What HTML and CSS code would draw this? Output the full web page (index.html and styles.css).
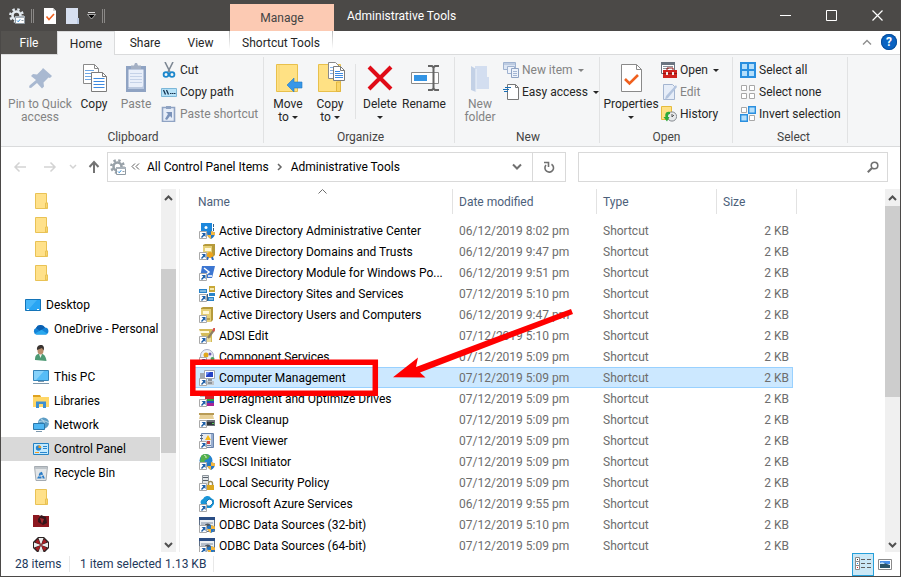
FILE: index.html
```
<!DOCTYPE html>
<html lang="en">
<head>
  <meta charset="UTF-8" />
  <title>Administrative Tools</title>
  <link rel="stylesheet" href="styles.css">
</head>
<body>

  <!-- shared icons -->
  <svg class="defs" aria-hidden="true">
    <symbol id="folder" viewBox="0 0 16 16">
      <path d="M2.500 .5h11v9.500h1v5.500h-12z" fill="#ffe18a" stroke="#e9c255"/>
      <path d="M12.500 15v-5h2v5z" fill="#f9d66e" stroke="#e9c255"/>
    </symbol>
    <symbol id="shortcut" viewBox="0 0 16 16">
      <path d="M.5 8.500h7v7h-7z" fill="#fff" stroke="#a9a9a9"/>
      <path d="M2.500 10h4v4l-1.300-1.300L3 15l-1-1 2.200-2.500z" fill="#1d5fa8"/>
    </symbol>
    <symbol id="shield" viewBox="0 0 16 16">
      <path d="M12 8l4 1.500c0 3-1 5-4 6.500-3-1.500-4-3.500-4-6.500z" fill="#2476c2"/>
      <path d="M12 8l4 1.500V12h-4zM8.300 12H12v4c-2-1-3.200-2.300-3.700-4z" fill="#f6b73c"/>
    </symbol>
    <symbol id="gear" viewBox="0 0 16 16">
      <g fill="none" stroke-width="2.600">
        <circle cx="7.500" cy="7.500" r="4"/>
        <circle cx="7.500" cy="7.500" r="6.200" stroke-width="2.400" stroke-dasharray="2.400 2.470"/>
      </g>
      <path d="M6.500 8.500h9v7h-9z" fill="#fff" stroke="#8f9aa3"/>
      <path d="M6 8h10v2H6z" fill="#a9b2ba" stroke="none"/>
      <path d="M8 12.500l1.200 1.200 2-2.400" fill="none" stroke="#2186d8"/>
      <path d="M12.500 12.500h2" stroke="#8f9aa3" fill="none"/>
    </symbol>
    <symbol id="odbc" viewBox="0 0 16 16">
      <path d="M.5 .5h15v14H.5z" fill="#eceff2" stroke="#5f6f86"/>
      <path d="M0 0h16v3H0z" fill="#2a4d84"/>
      <path d="M2 6h12M2 8h3" stroke="#7f8ea3"/>
      <path d="M5 8q4-3 7 0v3H7z" fill="#4b5560"/>
      <use href="#shield"/>
      <use href="#shortcut"/>
    </symbol>
    <symbol id="arrow-up" viewBox="0 0 15 17">
      <path d="M4 11l3.500-3.500L11 11" fill="none" stroke="#505050" stroke-width="2"/>
    </symbol>
    <symbol id="arrow-down" viewBox="0 0 15 17">
      <path d="M4 8l3.500 3.500L11 8" fill="none" stroke="#505050" stroke-width="2"/>
    </symbol>
  </svg>

  <header class="titlebar">
    <div class="quick">
      <svg class="i16 gear-light"><use href="#gear"/></svg>
      <span class="grip"></span>
      <button aria-label="Properties">
        <svg class="i16" viewBox="0 0 16 16">
          <path d="M2 0h9l3 3v13H2z" fill="#fff"/><path d="M11 0v3h3" fill="#d0d0d0"/>
          <path d="M4.500 8.500l2.500 3 5-5.500" fill="none" stroke="#f0601e" stroke-width="1.600"/>
        </svg>
      </button>
      <button aria-label="New folder">
        <svg class="i16" viewBox="0 0 16 16"><path d="M2 0h12v10h1v6H2z" fill="#d7e0f0"/><path d="M13 10h2v6h-2z" fill="#bccbe3"/></svg>
      </button>
      <button class="narrow" aria-label="Customize toolbar">
        <svg width="9" height="9" viewBox="0 0 9 9"><path d="M1 1.500h7" stroke="#ddd"/><path d="M.5 3.500h8l-4 4.500z" fill="#000" stroke="#ddd" stroke-width=".7"/></svg>
      </button>
      <span class="grip"></span>
    </div>
    <div class="manage">Manage</div>
    <h1>Administrative Tools</h1>
    <div class="controls">
      <button aria-label="Minimize"><svg width="11" height="11"><path d="M0 5.500h11" stroke="#fff"/></svg></button>
      <button aria-label="Maximize"><svg width="11" height="11"><path d="M.5 .5h10v10H.5z" fill="none" stroke="#fff"/></svg></button>
      <button aria-label="Close"><svg width="11" height="11"><path d="M.5 .5l10 10M10.500 .5l-10 10" stroke="#fff" stroke-width="1.200"/></svg></button>
    </div>
  </header>

  <nav class="tabs">
    <button class="tab file">File</button>
    <button class="tab home">Home</button>
    <button class="tab share">Share</button>
    <button class="tab view">View</button>
    <button class="tab context">Shortcut Tools</button>
    <button class="collapse" aria-label="Collapse the ribbon"><svg width="10" height="7"><path d="M1 5.500l4-4 4 4" fill="none" stroke="#8e8e8e" stroke-width="1.400"/></svg></button>
    <button class="help" aria-label="Help">?</button>
  </nav>

  <section class="ribbon">
    <div class="group clipboard">
      <div class="tools">
        <button class="big w74" disabled>
          <svg viewBox="0 0 32 32"><path d="M19 6l9 8-2 2-1.500-.5-5 5 .5 4-2 2-5-5.500L7 26l-2-.5.500-2L12 18l-5-4 2-2 4 .5 5-5z" fill="#a9b9d1"/></svg>
          Pin to Quick<br>access
        </button>
        <button class="big w34">
          <svg viewBox="0 0 32 32">
            <path d="M5.500 2.500h11l4 4v15h-15z" fill="#fff" stroke="#8a8a8a"/><path d="M16.500 2.500v4h4" fill="none" stroke="#8a8a8a"/>
            <path d="M7 8.500h9M7 11.500h8M7 14.500h6M7 17.500h6" stroke="#6fa7e4"/>
            <path d="M13.500 10.500h11l4 4v15h-15z" fill="#fff" stroke="#7c7c7c"/><path d="M24.500 10.500v4h4" fill="none" stroke="#7c7c7c"/>
            <path d="M15.500 16.500h11M15.500 19.500h11M15.500 22.500h11M15.500 25.500h11" stroke="#3e8ae0"/>
          </svg>
          Copy
        </button>
        <button class="big w50" disabled>
          <svg viewBox="0 0 32 32">
            <path d="M6 4h20v26H6z" fill="#8fa3c3"/><path d="M8.500 7.500h15v18h-15z" fill="#e9effa"/>
            <path d="M11 7V3.500h3L15 1h2l1 2.500h3V7z" fill="#a4b0c4"/>
            <path d="M10 11.500h12M10 14.500h12M10 17.500h12M10 20.500h12" stroke="#c5d2e8"/><path d="M8 26l14 0 2-5v6H8z" fill="#b9c8e0"/>
          </svg>
          Paste
        </button>
        <div class="stack">
          <button>
            <svg viewBox="0 0 16 16"><path d="M4 0l5 10M12 0L7 10" stroke="#7d8894" stroke-width="1.600"/><g fill="none" stroke="#1b87cc" stroke-width="1.800"><circle cx="5" cy="12.500" r="2.400"/><circle cx="11" cy="12.500" r="2.400"/></g></svg>
            Cut
          </button>
          <button>
            <svg viewBox="0 0 16 16"><path d="M.5 4.500h15v8H.5z" fill="#b6e2f8" stroke="#7cb7d8"/><path d="M2.500 6l2 4.500M5.500 6l2 4.500" stroke="#15324f" stroke-width="1.300"/><path d="M9 9.500h1.500M11 9.500h1.500M13 9.500h1.500" stroke="#15324f"/></svg>
            Copy path
          </button>
          <button disabled>
            <svg viewBox="0 0 16 16"><path d="M1.500 1.500h12v14h-12z" fill="#e6edf8" stroke="#8fa3c3" stroke-width="1.600"/><path d="M5 0h5v3H5z" fill="#8fa3c3"/><path d="M5 6h6v6l-2-2-3 4-2-1 3-5z" fill="#7b93ba"/></svg>
            Paste shortcut
          </button>
        </div>
      </div>
      <h2>Clipboard</h2>
    </div>

    <div class="group organize">
      <div class="tools">
        <button class="big w42">
          <svg viewBox="0 0 32 32"><path d="M4.500 2.500h21v27h-21z" fill="#ffe184" stroke="#e8c04c"/><path d="M7 3v26" stroke="#f4d374"/><path d="M15 23l7-7v4h8v6h-8v4z" fill="#3797e8" stroke="#2379c4" stroke-width=".6"/></svg>
          Move<br>to <i class="caret"></i>
        </button>
        <button class="big w42">
          <svg viewBox="0 0 32 32"><path d="M4.500 2.500h22v27h-22z" fill="#ffe184" stroke="#e8c04c"/><path d="M22.500 20v9.500h4V20z" fill="#f8d468" stroke="#e2b740"/>
            <path d="M14.500 .5h7l4 4v12h-11z" fill="#fff" stroke="#8a8a8a"/><path d="M16 5.500h6M16 8.500h4M16 11.500h4" stroke="#84b2e8"/>
            <path d="M19.500 4.500h7l4 4v10h-11z" fill="#fff" stroke="#7c7c7c"/><path d="M26.500 4.500v4h4" fill="none" stroke="#7c7c7c"/><path d="M21 9.500h5M21 11.500h8M21 13.500h8M21 15.500h8" stroke="#3e8ae0"/></svg>
          Copy<br>to <i class="caret"></i>
        </button>
        <span class="rule"></span>
        <button class="big w42">
          <svg viewBox="0 0 32 32"><path d="M5 5l22 22M27 5L5 27" stroke="#e00b17" stroke-width="4"/></svg>
          Delete<br><i class="caret"></i>
        </button>
        <button class="big w46">
          <svg viewBox="0 0 32 32"><path d="M3.500 10.500h27v11h-27z" fill="#fff" stroke="#8a8a8a"/><path d="M6 13h13v6H6z" fill="#3394e4"/><path d="M20 4h4l1.500 1.500L27 4h4M20 28h4l1.500-1.500L27 28h4M25.500 5v22" fill="none" stroke="#656565" stroke-width="2"/></svg>
          Rename
        </button>
      </div>
      <h2>Organize</h2>
    </div>

    <div class="group new">
      <div class="tools">
        <button class="big w46" disabled>
          <svg viewBox="0 0 32 32"><path d="M11 4h12v11h2v12H11z" fill="#d3def0"/><path d="M7 4l5 3v23l-5-2z" fill="#c3d1e6"/><path d="M12 7v23" stroke="#eef3fa"/></svg>
          New<br>folder
        </button>
        <div class="stack">
          <button disabled>
            <svg viewBox="0 0 16 16"><path d="M.5 .5h12v7H.5z" fill="#dbe5f3" stroke="#9fb2d0"/><path d="M.5 2h12" stroke="#9fb2d0"/><path d="M4.500 4.500h7v7h-7z" fill="#eef3fb" stroke="#9fb2d0"/><path d="M8.500 6.500h7v9h-7z" fill="#eef3fb" stroke="#8fa3c3"/><path d="M10 9.500h4M10 11.500h4M10 13.500h4" stroke="#a4b6d4"/></svg>
            New item <i class="caret"></i>
          </button>
          <button>
            <svg viewBox="0 0 16 16"><path d="M4.500 .5h8l3 3v12h-11z" fill="#fff" stroke="#777"/><path d="M12.500 .5v3h3" fill="none" stroke="#777"/><path d="M2 3.500h6M0 5.500h6M1 7.500h4" stroke="#1b6fb5"/></svg>
            Easy access <i class="caret"></i>
          </button>
        </div>
      </div>
      <h2>New</h2>
    </div>

    <div class="group open">
      <div class="tools">
        <button class="big w60">
          <svg viewBox="0 0 32 32"><path d="M6.500 2.500h15l5 5v22h-20z" fill="#fff" stroke="#8a8a8a"/><path d="M21.500 2.500v5h5" fill="none" stroke="#8a8a8a"/><path d="M10 17l4.500 4.500L23 13" fill="none" stroke="#f0601e" stroke-width="2.600"/></svg>
          Properties<br><i class="caret"></i>
        </button>
        <div class="stack">
          <button>
            <svg viewBox="0 0 16 16"><path d="M.5 .5h13v11H.5z" fill="#fff" stroke="#6a7480"/><path d="M0 0h14v3H0z" fill="#6a7480"/><path d="M2 4.500h10M2 6.500h6" stroke="#8a939d"/><path d="M6 8V6h6v2" fill="none" stroke="#8b1414"/><path d="M2 8h14v8H2z" fill="#cf2420"/><path d="M2 11.500h14" stroke="#8f1512"/><path d="M5 10h2v3H5zM11 10h2v3h-2z" fill="#eee"/></svg>
            Open <i class="caret"></i>
          </button>
          <button disabled>
            <svg viewBox="0 0 16 16"><path d="M2.500 .5h9l2 2v13h-11z" fill="#e6edf8" stroke="#a4b5d0"/><path d="M15 1l1 2-9 11-3 1.500 1-3.500z" fill="#b3c4de"/></svg>
            Edit
          </button>
          <button>
            <svg viewBox="0 0 16 16"><path d="M.5 .5h10v13H.5z" fill="#ffe184" stroke="#e5bc3e"/><circle cx="11" cy="10.500" r="4.600" fill="#e6e8ea" stroke="#84898f"/><path d="M11 8v3l2-2" fill="none" stroke="#555"/><path d="M9 6C4 5 4 9 4.500 11H2.500L6 15.500 8.500 11H7c0-2 0-3 2-3z" fill="#2faa3a"/></svg>
            History
          </button>
        </div>
      </div>
      <h2>Open</h2>
    </div>

    <div class="group select">
      <div class="tools">
        <div class="stack">
          <button>
            <svg viewBox="0 0 16 16"><path d="M1 1h14v14H1zM8 1v14M1 8h14" fill="#b5dffb" stroke="#2a8fdf" stroke-width="2"/></svg>
            Select all
          </button>
          <button>
            <svg viewBox="0 0 16 16"><path d="M1.500 1.500h5v5h-5zM9.500 1.500h5v5h-5zM1.500 9.500h5v5h-5zM9.500 9.500h5v5h-5z" fill="#fff" stroke="#a8a8a8"/></svg>
            Select none
          </button>
          <button>
            <svg viewBox="0 0 16 16"><path d="M1.500 1.500h5v5h-5zM9.500 9.500h5v5h-5z" fill="#fff" stroke="#a8a8a8"/><path d="M8.700.7h6.600v6.600H8.700zM.7 8.700h6.600v6.600H.7z" fill="#b5dffb" stroke="#2a8fdf" stroke-width="1.400"/></svg>
            Invert selection
          </button>
        </div>
      </div>
      <h2>Select</h2>
    </div>
  </section>

  <div class="address-row">
    <button class="nav" aria-label="Back" disabled><svg viewBox="0 0 16 16"><path d="M14 8H3M7.500 3.500L3 8l4.500 4.500" fill="none" stroke="#d3d3d3" stroke-width="1.500"/></svg></button>
    <button class="nav" aria-label="Forward" disabled><svg viewBox="0 0 16 16"><path d="M2 8h11M8.500 3.500L13 8l-4.500 4.500" fill="none" stroke="#d3d3d3" stroke-width="1.500"/></svg></button>
    <button class="nav recent" aria-label="Recent locations" disabled><svg viewBox="0 0 16 16"><path d="M5 6l3 3 3-3" fill="none" stroke="#d3d3d3" stroke-width="1.500"/></svg></button>
    <button class="nav up" aria-label="Up"><svg viewBox="0 0 16 16"><path d="M8 14V3M3.500 8L8 3l4.500 5" fill="none" stroke="#737373" stroke-width="2"/></svg></button>
    <div class="address">
      <svg class="i16 gear-dark"><use href="#gear"/></svg>
      <svg class="back2" width="9" height="8"><path d="M4 .5L1 3.500l3 3M8 .5L5 3.500l3 3" fill="none" stroke="#5f5f5f"/></svg>
      <a href="#">All Control Panel Items</a>
      <svg class="crumb" width="6" height="8"><path d="M1 1l3 3-3 3" fill="none" stroke="#666" stroke-width="1.500"/></svg>
      <a href="#">Administrative Tools</a>
      <button class="drop" aria-label="Previous locations"><svg width="10" height="8"><path d="M1 1.500l4 4 4-4" fill="none" stroke="#707070" stroke-width="2"/></svg></button>
      <button class="refresh" aria-label="Refresh"><svg width="12" height="13" viewBox="0 0 12 13"><path d="M8.500 3.200A4.300 4.300 0 1 1 3 4" fill="none" stroke="#707070" stroke-width="1.600"/><path d="M1 1.500h4.500v4.500" fill="none" stroke="#707070" stroke-width="1.600"/></svg></button>
    </div>
    <div class="search">
      <input type="text" aria-label="Search Administrative Tools">
      <svg width="12" height="12" viewBox="0 0 12 12"><circle cx="7.500" cy="4.500" r="3.300" fill="none" stroke="#707070" stroke-width="1.600"/><path d="M5 7L.8 11.200" stroke="#707070" stroke-width="2"/></svg>
    </div>
  </div>

  <main>
    <ul class="tree">
      <li><a href="#" aria-label="Folder"><svg><use href="#folder"/></svg></a></li>
      <li><a href="#" aria-label="Folder"><svg><use href="#folder"/></svg></a></li>
      <li><a href="#" aria-label="Folder"><svg><use href="#folder"/></svg></a></li>
      <li><a href="#" aria-label="Folder"><svg><use href="#folder"/></svg></a></li>
      <li class="root"><a href="#"><svg viewBox="0 0 16 16"><path d="M.5 2.500h15v11H.5z" fill="#29a5f3" stroke="#1474b8"/><path d="M1 3h11L3 13H1z" fill="#46b6f8"/><path d="M2 12.500h2M12 12.500h2" stroke="#fff"/></svg>Desktop</a></li>
      <li><a href="#"><svg viewBox="0 0 16 16"><path d="M3.500 13.500A3.400 3.400 0 0 1 3 7a5 5 0 0 1 9-.5 3.600 3.600 0 0 1 1 7z" fill="#1482d6"/><path d="M3 7a5 5 0 0 1 9-.5L7 10z" fill="#0b5fb0"/><path d="M2 12.500L8.500 8.700l6 4a3.600 3.600 0 0 1-1.500.8H3.500z" fill="#29a8ee"/></svg>OneDrive - Personal</a></li>
      <li><a href="#" aria-label="User"><svg viewBox="0 0 16 16"><path d="M2 15c0-4 1-6 5-6.500 4 0 6 3 6.500 7.500z" fill="#4d9a74"/><path d="M6 9l1.500 4L9 9z" fill="#eef3ef"/><ellipse cx="7.500" cy="5.500" rx="3" ry="4" fill="#b98d6c"/><path d="M4 5c-.5-4 2-5 4-5s4 2 2.500 5.500L9 3z" fill="#3a3431"/></svg></a></li>
      <li><a href="#"><svg viewBox="0 0 16 16"><path d="M.5 1.500h15v10H.5z" fill="#56bdf7" stroke="#3584b8"/><path d="M1 2h10L3 11H1z" fill="#86d2fb"/><path d="M0 14.500h16" stroke="#7c98ad"/><path d="M5 12.500h6" stroke="#7c98ad"/></svg>This PC</a></li>
      <li><a href="#"><svg viewBox="0 0 16 16"><path d="M0 2h7l1 2h8v10H0z" fill="#ffd768"/><path d="M0 2h7l1 2H0z" fill="#dfa220"/><path d="M3 15V8.500h10V15h-3v-4H6v4z" fill="#3e8fd0"/></svg>Libraries</a></li>
      <li><a href="#"><svg viewBox="0 0 16 16"><circle cx="10.500" cy="6" r="5.500" fill="#5b9cc4"/><path d="M8 2c3 1 4 4 3 8M6 5c4-2 7-1 10 1" stroke="#c3dfee" fill="none"/><path d="M.5 6.500h11v6H.5z" fill="#4eb7f4" stroke="#2b78ab"/><path d="M3 14.500h6" stroke="#7c98ad"/></svg>Network</a></li>
      <li class="current"><a href="#"><svg viewBox="0 0 16 16"><path d="M.5 2.500h15v11H.5z" fill="#c4eafe" stroke="#2583c4"/><circle cx="5.500" cy="7" r="2.700" fill="#2a86cf"/><path d="M5.500 7V4.300A2.700 2.700 0 0 1 8.200 7z" fill="#f59a1d"/><path d="M10 5.500h4M10 7.500h4M7 11.500h7" stroke="#2a86cf"/><path d="M2 11.500h4" stroke="#f59a1d"/></svg>Control Panel</a></li>
      <li><a href="#"><svg viewBox="0 0 16 16"><path d="M1.500 1.500h13l-1.500 14H3z" fill="#e3e6e8" stroke="#a4abb1"/><path d="M2 2h12v2H2z" fill="#bec4c9"/><path d="M5.500 12.500h5L8 7z" fill="none" stroke="#2a7cc7" stroke-width="1.800" stroke-dasharray="3 1"/></svg>Recycle Bin</a></li>
      <li><a href="#" aria-label="Folder"><svg><use href="#folder"/></svg></a></li>
      <li><a href="#" aria-label="Red folder"><svg viewBox="0 0 16 16"><path d="M0 2h6l1 1h9v11H0z" fill="#8c1820"/><path d="M5 6l3-4 5 2 1 6-4 2-5-3z" fill="#35161b"/><path d="M7 5l4 1-2 5z" fill="#a62a30"/></svg></a></li>
      <li><a href="#" aria-label="Umbrella"><svg viewBox="0 0 16 16"><path d="M5 0h6l5 5v6l-5 5H5l-5-5V5z" fill="#2b2424"/><path d="M8 8L5.500 1h5zM8 8l2.500 7h-5zM8 8l7-2.500v5zM8 8L1 5.500v5z" fill="#eee"/><path d="M8 8l3-6 3 3zM8 8l6 3-3 3zM8 8l-3 6-3-3zM8 8L2 5l3-3z" fill="#a71f24"/></svg></a></li>
    </ul>

    <div class="scrollbar tree-scroll">
      <svg><use href="#arrow-up"/></svg>
      <div class="track"><div class="thumb"></div></div>
      <svg><use href="#arrow-down"/></svg>
    </div>

    <div class="list">
      <svg class="sort" width="9" height="5"><path d="M.5 4.500l4-4 4 4" fill="none" stroke="#6d6d6d"/></svg>
      <table>
        <colgroup><col class="c-name"><col class="c-date"><col class="c-type"><col class="c-size"><col class="c-end"></colgroup>
        <thead>
          <tr><th>Name</th><th>Date modified</th><th>Type</th><th>Size</th><th class="end"></th></tr>
        </thead>
        <tbody>
          <tr><td><svg viewBox="0 0 16 16"><path d="M2 0h11v10H2z" fill="#1c87dc"/><path d="M14 1h1v3h-1zM14 5h1v3h-1z" fill="#315f8a"/><circle cx="7" cy="4.500" r="1.500" fill="#fff"/><use href="#shield"/><use href="#shortcut"/></svg>Active Directory Administrative Center</td><td>06/12/2019 8:02 pm</td><td>Shortcut</td><td>2 KB</td></tr>
          <tr><td><svg viewBox="0 0 16 16"><path d="M4 1l2-1h10v11l-2 2H4z" fill="#b59a3b"/><path d="M4 2h9v11H4z" fill="#e6d077"/><path d="M6 4h6v3H6z" fill="#fff8d8"/><circle cx="11" cy="11" r="3" fill="#eda31a"/><path d="M9 13l-1 3M13 13l1 3" stroke="#2a68ba" stroke-width="2"/><use href="#shortcut"/></svg>Active Directory Domains and Trusts</td><td>06/12/2019 9:47 pm</td><td>Shortcut</td><td>2 KB</td></tr>
          <tr><td><svg viewBox="0 0 16 16"><path d="M3 1h13l-3 12H1z" fill="#3c76d1"/><path d="M5 3l5 4-5 4M9 11h4" fill="none" stroke="#fff" stroke-width="1.500"/><use href="#shortcut"/></svg>Active Directory Module for Windows Po...</td><td>06/12/2019 9:51 pm</td><td>Shortcut</td><td>2 KB</td></tr>
          <tr><td><svg viewBox="0 0 16 16"><path d="M0 3h8v4H0zM10 7h6v3h-6zM9 11h6v4H9z" fill="#2882c8"/><path d="M1 5h6M10 13h4" stroke="#d6edfa"/><path d="M10 0h6v6h-6z" fill="#c8a838"/><path d="M11 2h4v2h-4z" fill="#f5e7ad"/><path d="M8.500 8v7" stroke="#34618c"/><use href="#shortcut"/></svg>Active Directory Sites and Services</td><td>07/12/2019 5:10 pm</td><td>Shortcut</td><td>2 KB</td></tr>
          <tr><td><svg viewBox="0 0 16 16"><path d="M2 1l2-1h10v13l-2 2H2z" fill="#b59a3b"/><path d="M2 2h10v13H2z" fill="#e6d077"/><path d="M4 4h6v3H4z" fill="#fff8d8"/><path d="M8 12h3" stroke="#8c7524"/><use href="#shortcut"/></svg>Active Directory Users and Computers</td><td>06/12/2019 9:47 pm</td><td>Shortcut</td><td>2 KB</td></tr>
          <tr><td><svg viewBox="0 0 16 16"><path d="M0 1h13v13H5z" fill="#d4bb58"/><path d="M1 3h9v2H1z" fill="#fff8d8"/><path d="M8 10h4v4H8z" fill="#ecdc98"/><path d="M15 2l-6 8" stroke="#8c8064" stroke-width="2.200"/><path d="M14 3l2-3" stroke="#d9504a" stroke-width="2.500"/><use href="#shortcut"/></svg>ADSI Edit</td><td>07/12/2019 5:10 pm</td><td>Shortcut</td><td>2 KB</td></tr>
          <tr><td><svg viewBox="0 0 16 16"><circle cx="8" cy="7" r="6.500" fill="#edf0f6" stroke="#a6acc2"/><circle cx="7" cy="6" r="2.500" fill="#e1a71b"/><circle cx="11" cy="5" r="1.500" fill="#6f5cb0"/><circle cx="13.500" cy="10" r="2" fill="#49a158"/><use href="#shortcut"/></svg>Component Services</td><td>07/12/2019 5:09 pm</td><td>Shortcut</td><td>2 KB</td></tr>
          <tr class="selected"><td><svg viewBox="0 0 16 16"><path d="M1 3h4v6H1z" fill="#9fa8b0"/><path d="M5.500 .5h10v8h-10z" fill="#fff" stroke="#a0a6b0"/><path d="M7 2h7v5H7z" fill="#2443c4"/><path d="M7 2h4l-4 4z" fill="#6a8bf0"/><path d="M9 9h4v2H9z" fill="#8d949b"/><path d="M8 11h7v4H8z" fill="#c1c6cb"/><path d="M9 13h4" stroke="#586068"/><use href="#shortcut"/></svg>Computer Management</td><td>07/12/2019 5:09 pm</td><td>Shortcut</td><td>2 KB</td></tr>
          <tr><td><svg viewBox="0 0 16 16"><path d="M1 1h14v5H1z" fill="#b9bec4"/><path d="M6 5h9v3H6z" fill="#d2222d"/><path d="M8 8h7v2H8z" fill="#2fa144"/><path d="M8 10h7v2H8z" fill="#2450c0"/><path d="M8 12h7v3H8z" fill="#a82494"/><use href="#shortcut"/></svg>Defragment and Optimize Drives</td><td>07/12/2019 5:09 pm</td><td>Shortcut</td><td>2 KB</td></tr>
          <tr><td><svg viewBox="0 0 16 16"><path d="M0 1h15v2H0z" fill="#b89b55"/><path d="M1 3h13l1 4H0z" fill="#e6cf96"/><path d="M6 8h10v6H6z" fill="#6c7278"/><path d="M8 10h7v3H8z" fill="#30363b"/><path d="M13 11h2v1h-2z" fill="#55d055"/><use href="#shortcut"/></svg>Disk Cleanup</td><td>07/12/2019 5:09 pm</td><td>Shortcut</td><td>2 KB</td></tr>
          <tr><td><svg viewBox="0 0 16 16"><path d="M2.500 .5h12v14h-12z" fill="#e4e9f1" stroke="#6883aa"/><path d="M1 2.500h3M1 5.500h3" stroke="#57657a"/><path d="M13 1v13" stroke="#4d72ae"/><path d="M9 2l3 5H6z" fill="#f5b91b"/><path d="M8 8h3v3H8z" fill="#d04040"/><path d="M8 12.500h4" stroke="#6883aa"/><use href="#shortcut"/></svg>Event Viewer</td><td>07/12/2019 5:09 pm</td><td>Shortcut</td><td>2 KB</td></tr>
          <tr><td><svg viewBox="0 0 16 16"><circle cx="7" cy="6.500" r="6.500" fill="#2583cf"/><path d="M2 2c3-3 7-2 9 0L9 5 6 6 5 9 1 8z" fill="#55b04a"/><path d="M5 1q3 1 2 3" stroke="#d4f0cf" fill="none"/><use href="#shield"/><use href="#shortcut"/></svg>iSCSI Initiator</td><td>07/12/2019 5:09 pm</td><td>Shortcut</td><td>2 KB</td></tr>
          <tr><td><svg viewBox="0 0 16 16"><path d="M3.500 .5h6v12h-6z" fill="#e2e6e9" stroke="#8d959c"/><path d="M4 2.500h5M4 5.500h5" stroke="#57606a"/><path d="M9.500 10V8.500a2 2 0 0 1 4 0V10" fill="none" stroke="#9c8b55" stroke-width="1.400"/><path d="M8 10h7v5H8z" fill="#dca71e"/><use href="#shortcut"/></svg>Local Security Policy</td><td>07/12/2019 5:09 pm</td><td>Shortcut</td><td>2 KB</td></tr>
          <tr><td><svg viewBox="0 0 16 16"><path d="M2 8a3.500 3.500 0 0 1 2-5 4.500 4.500 0 0 1 8-1l3 2v4l-3 4H6z" fill="#1b96d8"/><path d="M7 6l3-3 3 1 1 3-3 3H8z" fill="#fff" stroke="#1478b4"/><use href="#shortcut"/></svg>Microsoft Azure Services</td><td>06/12/2019 9:55 pm</td><td>Shortcut</td><td>2 KB</td></tr>
          <tr><td><svg><use href="#odbc"/></svg>ODBC Data Sources (32-bit)</td><td>07/12/2019 5:10 pm</td><td>Shortcut</td><td>2 KB</td></tr>
          <tr><td><svg><use href="#odbc"/></svg>ODBC Data Sources (64-bit)</td><td>07/12/2019 5:09 pm</td><td>Shortcut</td><td>2 KB</td></tr>
        </tbody>
      </table>

      <!-- red marker on the Computer Management row -->
      <svg class="marker" width="384" height="90" viewBox="0 0 384 90">
        <path d="M2.800 55.300h182.500v31H2.800z" fill="none" stroke="#f00" stroke-width="5.500"/>
        <path d="M203 70.300L228 50.500l-2 9.500L381 2l2 5L230 65.500l5.500 5z" fill="#f00"/>
      </svg>
    </div>

    <div class="scrollbar list-scroll">
      <svg><use href="#arrow-up"/></svg>
      <div class="track"><div class="thumb"></div></div>
      <svg><use href="#arrow-down"/></svg>
    </div>
  </main>

  <footer>
    <span class="count">28 items</span>
    <span class="chosen">1 item selected</span>
    <span class="size">1.13 KB</span>
    <div class="views">
      <button class="on" aria-label="Details view"><svg width="16" height="14" viewBox="0 0 16 14"><path d="M.5 .5h4v4h-4zM.5 4.500h4v4h-4zM.5 8.500h4v4h-4z" fill="#fff" stroke="#8a8a8a"/><path d="M2 2h1v1H2z" fill="#333"/><path d="M2 6h1v1H2z" fill="#1a8be0"/><path d="M2 10h1v1H2z" fill="#e02020"/><path d="M6 2.500h4M12 2.500h4M6 6.500h4M12 6.500h4M6 10.500h4M12 10.500h4" stroke="#5f5f5f"/></svg></button>
      <button aria-label="Thumbnail view"><svg width="14" height="11" viewBox="0 0 14 11"><path d="M.5 .5h13v10H.5z" fill="#fff" stroke="#8a8a8a"/><path d="M2 2h10v3H2z" fill="#4a90e8"/><path d="M2 5l4-1 6 2v3H2z" fill="#2b5468"/><path d="M2 4q3-2 5 1H2z" fill="#bfe0fa"/></svg></button>
    </div>
  </footer>

</body>
</html>
```
FILE: styles.css
```
* {
  box-sizing: border-box;
}

body {
  margin: 0;
  height: 100vh;
  display: flex;
  flex-direction: column;
  overflow: hidden;
  font-family: Roboto, sans-serif;
  font-size: 12px;
  line-height: 16px;
  color: #000;
  background: #fff;
  border: 1px solid #4b4947;
  border-top: none;
}

h1, h2, ul {
  margin: 0;
  padding: 0;
  font-size: 12px;
  font-weight: normal;
}

button {
  display: flex;
  align-items: center;
  justify-content: center;
  margin: 0;
  padding: 0;
  border: none;
  background: none;
  font: inherit;
  color: #262626;
}

button:disabled {
  color: #838383;
}

a {
  color: inherit;
  text-decoration: none;
}

svg {
  display: block;
  flex: none;
}

.defs {
  position: absolute;
  width: 0;
  height: 0;
}

.i16 {
  width: 16px;
  height: 16px;
}

/* title bar */
.titlebar {
  display: flex;
  height: 31px;
  background: #4b4947;
  color: #fff;
}

.quick {
  width: 229px;
  padding-left: 8px;
  display: flex;
  align-items: center;
  gap: 6px;
}

.grip {
  width: 3px;
  height: 14px;
  border: solid #8a8886;
  border-width: 0 1px;
}

.quick .grip:first-of-type {
  margin-right: 2px;
}

.quick .narrow {
  width: 10px;
}

.gear-light {
  stroke: #e3eaf0;
}

.gear-dark {
  stroke: #98a1a8;
}

.manage {
  width: 104px;
  margin-top: 4px;
  background: #fccab3;
  color: #444;
  text-align: center;
  line-height: 28px;
}

h1 {
  flex: 1;
  padding-left: 13px;
  line-height: 32px;
}

.controls {
  display: flex;
}

.controls button {
  width: 46px;
}

/* tabs */
.tabs {
  display: flex;
  height: 24px;
  border-bottom: 1px solid #dadbdc;
}

.tab {
  height: 24px;
}

.file {
  width: 56px;
  height: 23px;
  background: #54524f;
  color: #fff;
}

.home {
  width: 58px;
  background: #f5f6f7;
  border: 1px solid #dadbdc;
  border-bottom: none;
}

.share {
  width: 60px;
}

.view {
  width: 51px;
}

.context {
  width: 104px;
  margin-left: 3px;
  background: linear-gradient(#bbb, #fff) left top / 1px 18px no-repeat,
    linear-gradient(#bbb, #fff) right top / 1px 18px no-repeat;
}

.collapse {
  margin-left: auto;
  margin-right: 9px;
}

.help {
  width: 16px;
  height: 16px;
  margin: 3px 3px 0 0;
  border-radius: 50%;
  background: #0a63c2;
  box-shadow: inset 0 0 0 1px #084e9b;
  color: #fff;
  font-weight: bold;
}

/* ribbon */
.ribbon {
  display: flex;
  padding: 2px 0 3px;
  background: #f5f6f7;
  border-bottom: 1px solid #dadbdc;
}

.group {
  display: flex;
  flex-direction: column;
  height: 86px;
  padding: 2px 0 0 2px;
  border-right: 1px solid #e1e2e3;
}

.clipboard {
  width: 263px;
}

.organize {
  width: 191px;
  padding-left: 3px;
}

.new {
  width: 145px;
}

.open {
  width: 133px;
  padding-left: 1px;
}

.select {
  width: 115px;
  padding-left: 7px;
}

.tools {
  display: flex;
  align-items: flex-start;
  height: 72px;
}

.group h2 {
  line-height: 12px;
  text-align: center;
  color: #444;
}

.big {
  display: block;
  padding-top: 3px;
  line-height: 13px;
  text-align: center;
}

.big svg {
  width: 32px;
  height: 32px;
  margin: 0 auto 4px;
}

.w34 {
  width: 34px;
}

.w42 {
  width: 42px;
}

.w46 {
  width: 46px;
}

.w50 {
  width: 50px;
}

.w60 {
  width: 60px;
}

.w74 {
  width: 74px;
}

.tools button {
  white-space: nowrap;
}

.rule {
  width: 1px;
  height: 55px;
  margin: 5px 3px 0 4px;
  background: #e1e2e3;
}

.stack {
  display: flex;
  flex-direction: column;
}

.stack button {
  height: 22px;
  gap: 3px;
  justify-content: flex-start;
}

.stack svg {
  width: 16px;
  height: 16px;
}

.caret {
  display: inline-block;
  border: 3px solid transparent;
  border-top-color: currentColor;
  border-bottom: none;
  vertical-align: 2px;
}

.stack .caret {
  margin-left: 2px;
}

/* address bar */
.address-row {
  display: flex;
  align-items: center;
  height: 40px;
  margin-bottom: 2px;
  padding: 0 12px 0 11px;
}

.nav {
  width: 16px;
  height: 16px;
  margin-right: 14px;
}

.nav svg {
  width: 16px;
  height: 16px;
}

.recent {
  margin: 0 5px 0 -7px;
}

.up {
  margin-right: 5px;
}

.address {
  flex: 455;
  display: flex;
  align-items: center;
  height: 30px;
  padding-left: 2px;
  border: 1px solid #d9d9d9;
}

.back2 {
  margin: 0 7px 0 5px;
}

.crumb {
  margin: 0 8px;
}

.drop {
  margin-left: auto;
  width: 30px;
  height: 28px;
}

.refresh {
  width: 33px;
  height: 28px;
  border-left: 1px solid #d9d9d9;
}

.search {
  flex: 300;
  display: flex;
  align-items: center;
  height: 30px;
  margin-left: 12px;
  padding-right: 8px;
  border: 1px solid #d9d9d9;
}

.search input {
  flex: 1;
  min-width: 0;
  border: none;
  outline: none;
  font: inherit;
}

/* navigation tree */
main {
  flex: 1;
  min-height: 0;
  display: flex;
}

.tree {
  width: 160px;
  overflow: hidden;
  list-style: none;
}

.tree a {
  display: flex;
  align-items: center;
  gap: 5px;
  height: 24px;
  padding-left: 32px;
  white-space: nowrap;
}

.tree svg {
  width: 16px;
  height: 16px;
}

.tree .root {
  margin-top: 8px;
}

.tree .root a {
  padding-left: 24px;
}

.current {
  width: 159px;
  background: #d9d9d9;
}

.scrollbar {
  display: flex;
  flex-direction: column;
  width: 15px;
  background: #f0f0f0;
}

.scrollbar svg {
  width: 15px;
  height: 17px;
}

.track {
  flex: 1;
}

.thumb {
  background: #cdcdcd;
}

.tree-scroll .track {
  padding-top: 63px;
}

.tree-scroll .thumb {
  height: 69%;
}

.list-scroll .thumb {
  height: 58%;
}

/* file list */
.list {
  flex: 1;
  position: relative;
  margin-left: 3px;
  padding-left: 14px;
  overflow: hidden;
  border-left: 1px solid #f0f0f0;
}

.sort {
  position: absolute;
  left: 138px;
  top: 0;
}

table {
  table-layout: fixed;
  width: 603px;
  border-spacing: 0;
}

.c-name {
  width: 259px;
}

.c-date {
  width: 144px;
}

.c-type {
  width: 120px;
}

.c-size {
  width: 76px;
}

.c-end {
  width: 4px;
}

th {
  height: 31px;
  padding: 0 0 6px 6px;
  font-weight: normal;
  text-align: left;
  color: #4c607a;
  background: linear-gradient(#e2e2e2, #e2e2e2) right top / 1px 25px no-repeat;
}

th:first-child {
  padding-left: 4px;
}

th:nth-child(4) {
  background: none;
}

th.end {
  padding: 0;
}

td {
  height: 21px;
  padding: 0 0 0 6px;
  white-space: nowrap;
  color: #6d6d6d;
}

td:first-child {
  padding-left: 25px;
  color: #000;
}

td:last-child {
  padding: 0 4px 0 0;
  text-align: right;
}

td svg {
  float: left;
  width: 16px;
  height: 16px;
  margin-left: -20px;
}

.selected td {
  background: #cce8ff;
  box-shadow: inset 0 1px #99d1ff, inset 0 -1px #99d1ff;
}

.selected td:last-child {
  box-shadow: inset 0 1px #99d1ff, inset -1px -1px #99d1ff;
}

.marker {
  position: absolute;
  left: 10px;
  top: 118px;
}

/* status bar */
footer {
  display: flex;
  align-items: center;
  height: 24px;
  padding-left: 14px;
  color: #1e395b;
}

.count {
  width: 55px;
  border-right: 1px solid #e8e8e8;
}

.chosen {
  width: 85px;
  margin-left: 10px;
}

.size {
  width: 49px;
  border-right: 1px solid #e8e8e8;
}

.views {
  display: flex;
  margin-left: auto;
  padding-right: 4px;
}

.views button {
  width: 22px;
  height: 23px;
}

.views .on {
  background: #cbe8f6;
  border: 1px solid #26a0da;
}
```
